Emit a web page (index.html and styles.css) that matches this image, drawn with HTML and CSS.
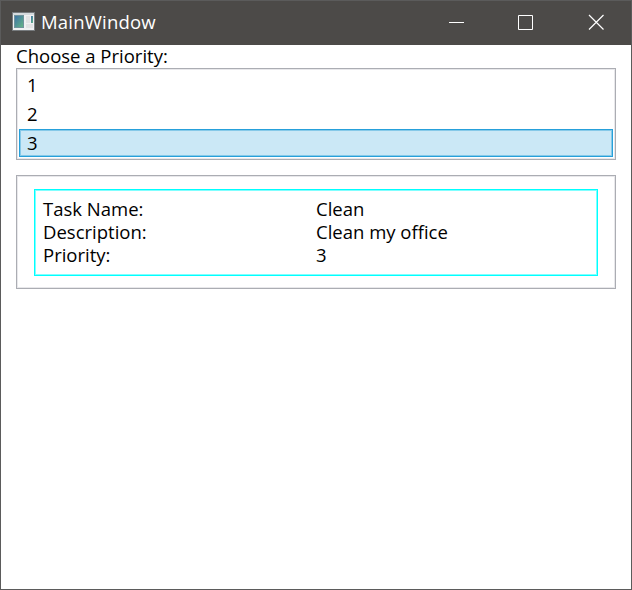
FILE: index.html
```html
<!DOCTYPE html>
<html lang="en">
<head>
<meta charset="utf-8">
<title>MainWindow</title>
<link rel="stylesheet" href="styles.css">
</head>
<body>
<div class="window">
  <header class="titlebar">
    <svg class="app-icon" width="23" height="19" viewBox="0 0 23 19">
      <defs><linearGradient id="pane" x1="0" y1="0" x2="1" y2="1"><stop offset="0" stop-color="#3d70a8"/><stop offset="1" stop-color="#66b784"/></linearGradient></defs>
      <rect width="23" height="19" fill="#777b7e"/>
      <rect x="1" y="1" width="21" height="17" fill="#f0f1f2"/>
      <rect x="1" y="1" width="21" height="2" fill="#d5dadd"/>
      <rect x="2.5" y="3.5" width="9" height="12" fill="url(#pane)" stroke="#70949c"/>
      <rect x="14" y="4" width="4" height="7" fill="#e2e3e4"/>
      <rect x="14" y="12" width="7" height="4" fill="#e2e3e4"/>
      <rect x="19" y="4" width="2" height="7" fill="url(#pane)"/>
    </svg>
    <h1 class="title">MainWindow</h1>
    <div class="controls">
      <svg width="69" height="44" viewBox="0 0 69 44"><path d="M18 21.5h15" stroke="#fff"/></svg>
      <svg width="70" height="44" viewBox="0 0 70 44"><path d="M18.5 14.5h14v14h-14z" fill="none" stroke="#fff"/></svg>
      <svg width="61" height="44" viewBox="0 0 61 44"><path d="M19 14l14.5 14.5M33.5 14L19 28.5" stroke="#fff" stroke-width="1.2"/></svg>
    </div>
  </header>
  <main class="content">
    <p class="label">Choose a Priority:</p>
    <ul class="list frame">
      <li>1</li>
      <li>2</li>
      <li class="selected">3</li>
    </ul>
    <section class="details frame">
      <dl class="task">
        <dt>Task Name:</dt><dd>Clean</dd>
        <dt>Description:</dt><dd>Clean my office</dd>
        <dt>Priority:</dt><dd>3</dd>
      </dl>
    </section>
  </main>
</div>
</body>
</html>
```
FILE: styles.css
```css
* { box-sizing: border-box; margin: 0; padding: 0; }
body {
  font-family: "Open Sans", "Noto Sans", sans-serif;
  font-size: 18.5px;
  color: #000;
}
.window {
  width: 632px;
  height: 590px;
  border: 1px solid #5b5b5b;
  background: #fff;
}
.titlebar {
  display: flex;
  align-items: center;
  height: 44px;
  padding-left: 11px;
  background: #4c4a48;
  color: #fff;
}
.app-icon { margin-top: -3px; }
.title {
  margin-left: 6px;
  font-size: 18.5px;
  font-weight: 400;
  line-height: 42px;
  height: 44px;
  letter-spacing: 0.2px;
}
.controls { display: flex; margin-left: auto; }
.content { padding: 0 15px; }
.label { height: 23px; line-height: 22px; }
.frame {
  border: 1px solid #abadb3;
  box-shadow: inset 0 0 0 1px #e8e8eb;
}
.list {
  height: 92px;
  padding: 2px;
  list-style: none;
}
.list li {
  height: 29px;
  padding-left: 8px;
  line-height: 28px;
}
.list .selected {
  height: 28px;
  padding-left: 7px;
  line-height: 26px;
  border: 1px solid #26a0da;
  box-shadow: inset 0 0 0 1px #86c9e8;
  background: #cbe8f6;
}
.details {
  height: 114px;
  margin-top: 15px;
  padding: 13px 17px;
}
.task {
  display: grid;
  grid-template-columns: 273px 1fr;
  grid-auto-rows: 23px;
  height: 87px;
  padding: 7px 8px 9px;
  border: 1px solid #00ffff;
  box-shadow: inset 0 0 0 1px #80ffff;
  line-height: 23px;
}
```
